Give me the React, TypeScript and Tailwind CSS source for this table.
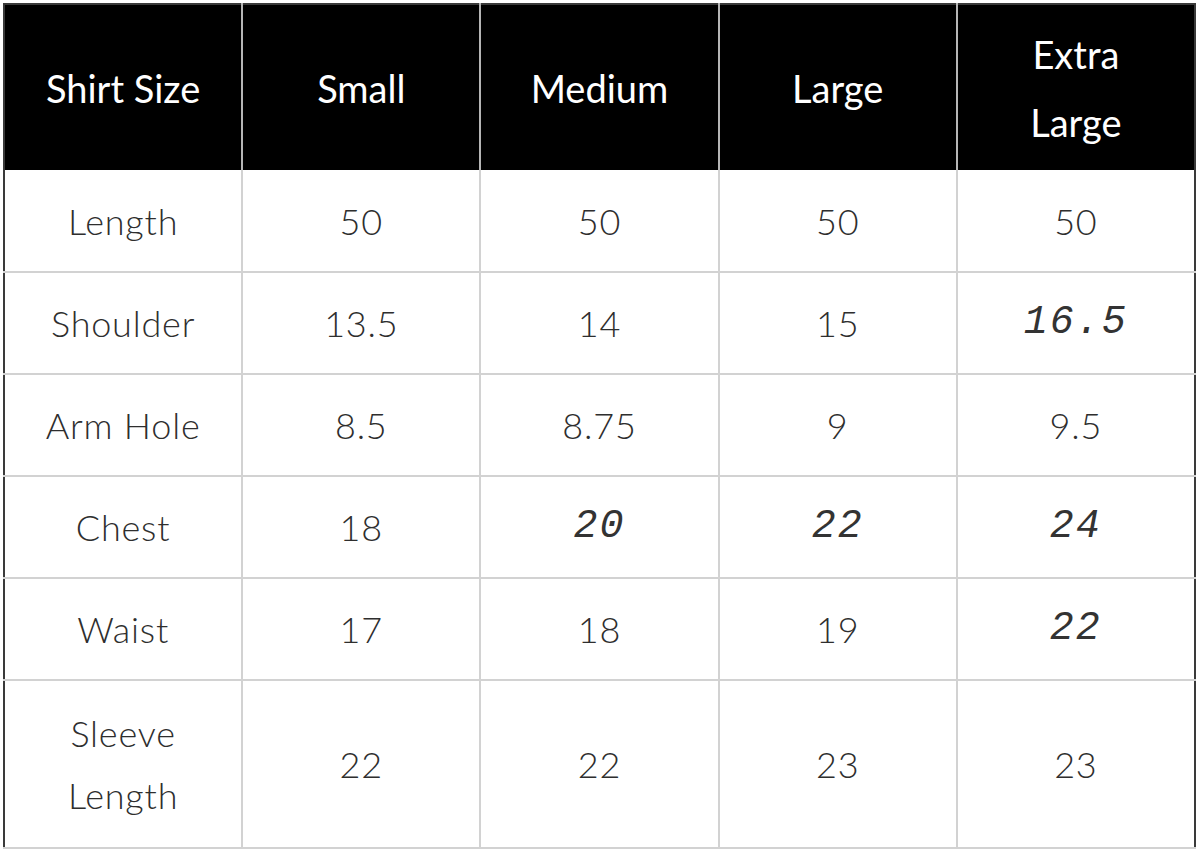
import React from 'react';

type Cell = string | { v: string; mono: true };

const headers = ['Shirt Size', 'Small', 'Medium', 'Large', 'Extra\nLarge'];

const rows: { label: string; cells: Cell[] }[] = [
    { label: 'Length', cells: ['50', '50', '50', '50'] },
    { label: 'Shoulder', cells: ['13.5', '14', '15', { v: '16.5', mono: true }] },
    { label: 'Arm Hole', cells: ['8.5', '8.75', '9', '9.5'] },
    { label: 'Chest', cells: ['18', { v: '20', mono: true }, { v: '22', mono: true }, { v: '24', mono: true }] },
    { label: 'Waist', cells: ['17', '18', '19', { v: '22', mono: true }] },
    { label: 'Sleeve\nLength', cells: ['22', '22', '23', '23'] },
];

const renderText = (text: string) =>
    text.split('\n').map((line, i) => (
        <React.Fragment key={i}>
            {i > 0 && <br />}
            {line}
        </React.Fragment>
    ));

const App: React.FC = () => {
    return (
        <div className="w-[1200px] h-[849px] bg-white pt-[3px] pl-[3px] font-['Lato',sans-serif]">
            <table className="w-[1193px] table-fixed border-collapse border-2 border-[#3a3a3a]">
                <thead>
                    <tr className="h-[166px] bg-black">
                        {headers.map((h, i) => (
                            <th
                                key={h}
                                className={`w-1/5 font-normal text-white text-[38px] leading-[68px] text-center align-middle ${i > 0 ? 'border-l-2 border-[#b5b5b5]' : ''}`}
                            >
                                {renderText(h)}
                            </th>
                        ))}
                    </tr>
                </thead>
                <tbody>
                    {rows.map((r, ri) => (
                        <tr
                            key={r.label}
                            className={`${ri === rows.length - 1 ? 'h-[168px]' : 'h-[102px]'} border-b-2 border-[#d2d2d2]`}
                        >
                            <td className="text-center align-middle text-[36px] tracking-[0.8px] leading-[62px] font-light text-[#2e2e2e] border-r-2 border-[#d2d2d2]">
                                {renderText(r.label)}
                            </td>
                            {r.cells.map((c, ci) => (
                                <td
                                    key={ci}
                                    className={`text-center align-middle text-[#2e2e2e] ${ci < 3 ? 'border-r-2 border-[#d2d2d2]' : ''}`}
                                >
                                    {typeof c === 'string' ? (
                                        <span className="text-[36px] tracking-[0.8px] font-light leading-[62px]">{c}</span>
                                    ) : (
                                        <span className="font-['Liberation_Mono',monospace] italic text-[40px] tracking-[2px] leading-[62px] text-[#333333]">
                                            {c.v}
                                        </span>
                                    )}
                                </td>
                            ))}
                        </tr>
                    ))}
                </tbody>
            </table>
        </div>
    );
};

export default App;
